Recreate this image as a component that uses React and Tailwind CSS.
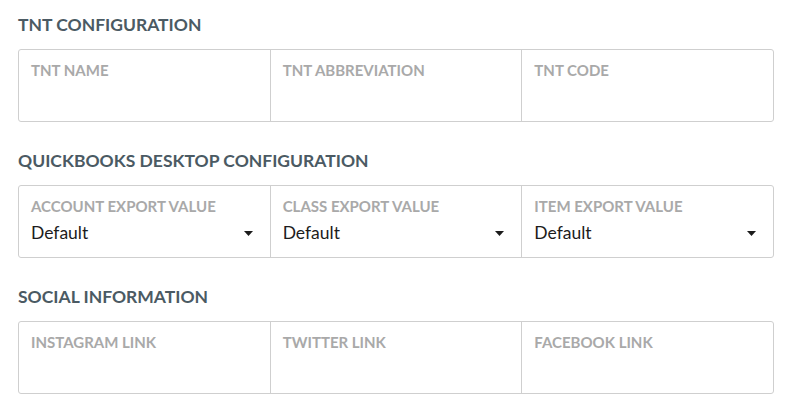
import React from "react";

function Field({ label, value }) {
  return (
    <div className="flex-1 h-full px-[12px] pt-[11px] border-l border-[#cfcfcf] first:border-l-0 relative">
      <div className="text-[15px] font-bold leading-[18px] text-[#a9a9a9]">{label}</div>
      {value !== undefined && (
        <div className="flex items-center justify-between mt-[7px] pr-[5px]">
          <span className="text-[17.5px] leading-[22px] text-[#1c1c1c]">{value}</span>
          <svg width="9" height="5" viewBox="0 0 9 5" className="mt-[1px]">
            <path d="M0 0h9L4.5 5z" fill="#1c1c1c" />
          </svg>
        </div>
      )}
    </div>
  );
}

function Section({ title, fields }) {
  return (
    <div className="mb-[28px]">
      <h2 className="text-[17.5px] font-bold leading-[22px] text-[#4b5a63] mb-[13px]">{title}</h2>
      <div className="flex h-[73px] border border-[#cfcfcf] rounded-[3px]">
        {fields.map((f) => (
          <Field key={f.label} {...f} />
        ))}
      </div>
    </div>
  );
}

export default function App() {
  return (
    <div
      className="w-[793px] h-[408px] bg-white pl-[18px] pt-[14px] pr-[19px] overflow-hidden"
      style={{ fontFamily: "Lato, 'Open Sans', sans-serif" }}
    >
      <Section
        title="TNT CONFIGURATION"
        fields={[{ label: "TNT NAME" }, { label: "TNT ABBREVIATION" }, { label: "TNT CODE" }]}
      />
      <Section
        title="QUICKBOOKS DESKTOP CONFIGURATION"
        fields={[
          { label: "ACCOUNT EXPORT VALUE", value: "Default" },
          { label: "CLASS EXPORT VALUE", value: "Default" },
          { label: "ITEM EXPORT VALUE", value: "Default" },
        ]}
      />
      <Section
        title="SOCIAL INFORMATION"
        fields={[{ label: "INSTAGRAM LINK" }, { label: "TWITTER LINK" }, { label: "FACEBOOK LINK" }]}
      />
    </div>
  );
}
